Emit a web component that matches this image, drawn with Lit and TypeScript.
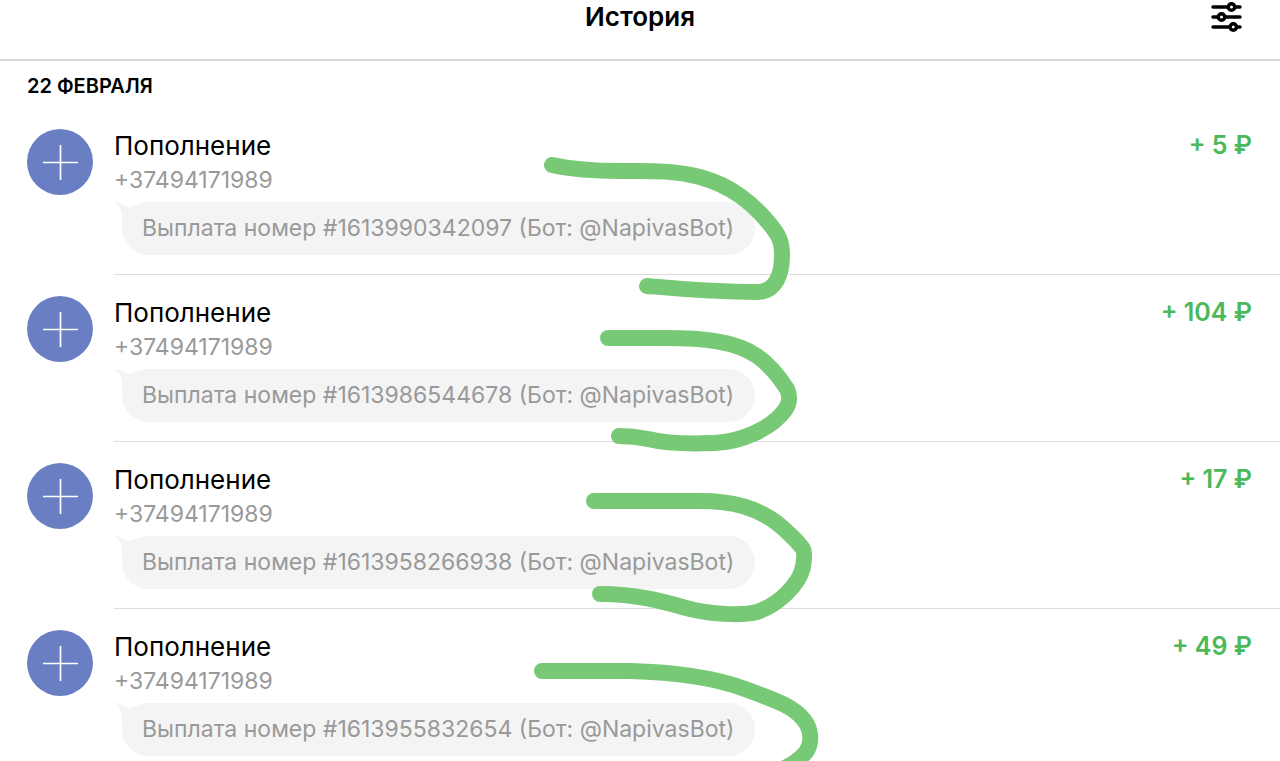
import { LitElement, html, css, svg } from "lit";
import { customElement, property } from "lit/decorators.js";

interface Operation {
  title: string;
  phone: string;
  comment: string;
  amount: string;
}

const operations: Operation[] = [
  { title: "Пополнение", phone: "+37494171989", comment: "Выплата номер #1613990342097 (Бот: @NapivasBot)", amount: "+ 5 ₽" },
  { title: "Пополнение", phone: "+37494171989", comment: "Выплата номер #1613986544678 (Бот: @NapivasBot)", amount: "+ 104 ₽" },
  { title: "Пополнение", phone: "+37494171989", comment: "Выплата номер #1613958266938 (Бот: @NapivasBot)", amount: "+ 17 ₽" },
  { title: "Пополнение", phone: "+37494171989", comment: "Выплата номер #1613955832654 (Бот: @NapivasBot)", amount: "+ 49 ₽" },
];

// Freehand marker strokes laid over the list
const strokes = [
  "M552 165C575 170 595 171 620 171C650 171 672 170 700 177C732 186 752 203 768 222C779 235 782 241 782 255C782 274 776 292 757 292C715 292 682 289 647 286",
  "M608 338H664C704 338 735 341 757 356C770 365 780 378 787 389C790 395 790 403 785 410C772 428 742 442 714 443C690 444 664 443 648 439C638 437 630 436 619 436",
  "M594 501H700C734 501 757 508 777 523C787 531 799 543 803 549C805 553 804 561 803 567C799 585 778 605 757 612C742 616 710 614 690 609C668 603 640 594 600 594",
  "M542 671H630C672 672 710 676 745 689C777 701 793 706 804 720C812 730 812 744 806 752C801 758 795 763 785 768",
];

@customElement("operation-row")
export class OperationRow extends LitElement {
  @property({ attribute: false }) op!: Operation;

  static styles = css`
    :host {
      display: grid;
      grid-template-columns: 66px 1fr;
      column-gap: 21px;
      padding-left: 27px;
    }
    .avatar {
      display: block;
      width: 66px;
      height: 66px;
      margin-top: 21px;
    }
    .content {
      display: flex;
      align-items: flex-start;
      justify-content: space-between;
      padding: 21px 28px 19px 0;
      border-bottom: 1px solid #dcdcdd;
    }
    .title,
    .phone,
    .comment {
      margin: 0;
      font-weight: 400;
    }
    .title {
      font-size: 26px;
      line-height: 34px;
    }
    .phone {
      font-size: 23px;
      line-height: 34px;
      color: #999;
    }
    .bubble {
      display: flex;
      align-items: flex-start;
      margin-top: 5px;
    }
    .tail {
      display: block;
      width: 24px;
      height: 27px;
      margin-right: -16px;
    }
    .comment {
      padding: 0 21px 0 20px;
      border-radius: 27px;
      background: #f4f4f4;
      font-size: 23px;
      line-height: 53px;
      color: #999;
    }
    .amount {
      font-size: 25px;
      line-height: 32px;
      font-weight: 600;
      color: #4bb85a;
      white-space: nowrap;
    }
  `;

  render() {
    const { title, phone, comment, amount } = this.op;
    return html`
      <svg class="avatar" viewBox="0 0 66 66" aria-hidden="true">
        <circle cx="33" cy="33" r="33" fill="#6a7fc3" />
        <path d="M33.500 16v35M16 33.500h35" stroke="#fff" stroke-width="1.700" />
      </svg>
      <div class="content">
        <div>
          <h3 class="title">${title}</h3>
          <p class="phone">${phone}</p>
          <div class="bubble">
            <svg class="tail" viewBox="0 0 24 27" aria-hidden="true">
              <path d="M0 0C5 0 9 2 14 5C17 5 20 3 24 2V27H8V15C8 8 5 3 0 0Z" fill="#f4f4f4" />
            </svg>
            <p class="comment">${comment}</p>
          </div>
        </div>
        <span class="amount">${amount}</span>
      </div>
    `;
  }
}

@customElement("app-root")
export class AppRoot extends LitElement {
  static styles = css`
    :host {
      display: block;
      position: relative;
      height: 100vh;
      overflow: hidden;
      background: #fff;
      color: #000;
      font-family: Inter, "Liberation Sans", sans-serif;
    }
    .header {
      display: grid;
      grid-template-columns: 1fr auto 1fr;
      align-items: start;
      height: 59px;
      border-bottom: 2px solid #d6d6d6;
    }
    .heading {
      grid-column: 2;
      margin: 0;
      font-size: 26px;
      line-height: 34px;
      font-weight: 600;
    }
    .filter {
      justify-self: end;
      margin-right: 38px;
      padding: 0;
      border: 0;
      background: none;
      color: inherit;
      cursor: pointer;
    }
    .filter-icon {
      display: block;
      width: 33px;
      height: 34px;
    }
    .date {
      margin: 0;
      padding: 9px 27px 6px;
      font-size: 20px;
      line-height: 32px;
      font-weight: 600;
    }
    .marks {
      position: absolute;
      top: 0;
      left: 0;
      width: 1280px;
      height: 780px;
      pointer-events: none;
    }
  `;

  render() {
    return html`
      <header class="header">
        <h1 class="heading">История</h1>
        <button class="filter" type="button" aria-label="Фильтр">
          <svg class="filter-icon" viewBox="0 0 33 34" fill="none" stroke="currentColor" stroke-width="3.400" stroke-linecap="round">
            <path d="M4 7h27M4 17h27M4 27h27" />
            <g fill="#fff">
              <circle cx="22.500" cy="7" r="3.200" />
              <circle cx="12.500" cy="17" r="3.200" />
              <circle cx="24.300" cy="27" r="3.200" />
            </g>
          </svg>
        </button>
      </header>
      <main>
        <h2 class="date">22 ФЕВРАЛЯ</h2>
        ${operations.map((op) => html`<operation-row .op=${op}></operation-row>`)}
      </main>
      <svg class="marks" viewBox="0 0 1280 780" fill="none" stroke="#78c976" stroke-width="16" stroke-linecap="round" stroke-linejoin="round" aria-hidden="true">
        ${strokes.map((d) => svg`<path d=${d} />`)}
      </svg>
    `;
  }
}
